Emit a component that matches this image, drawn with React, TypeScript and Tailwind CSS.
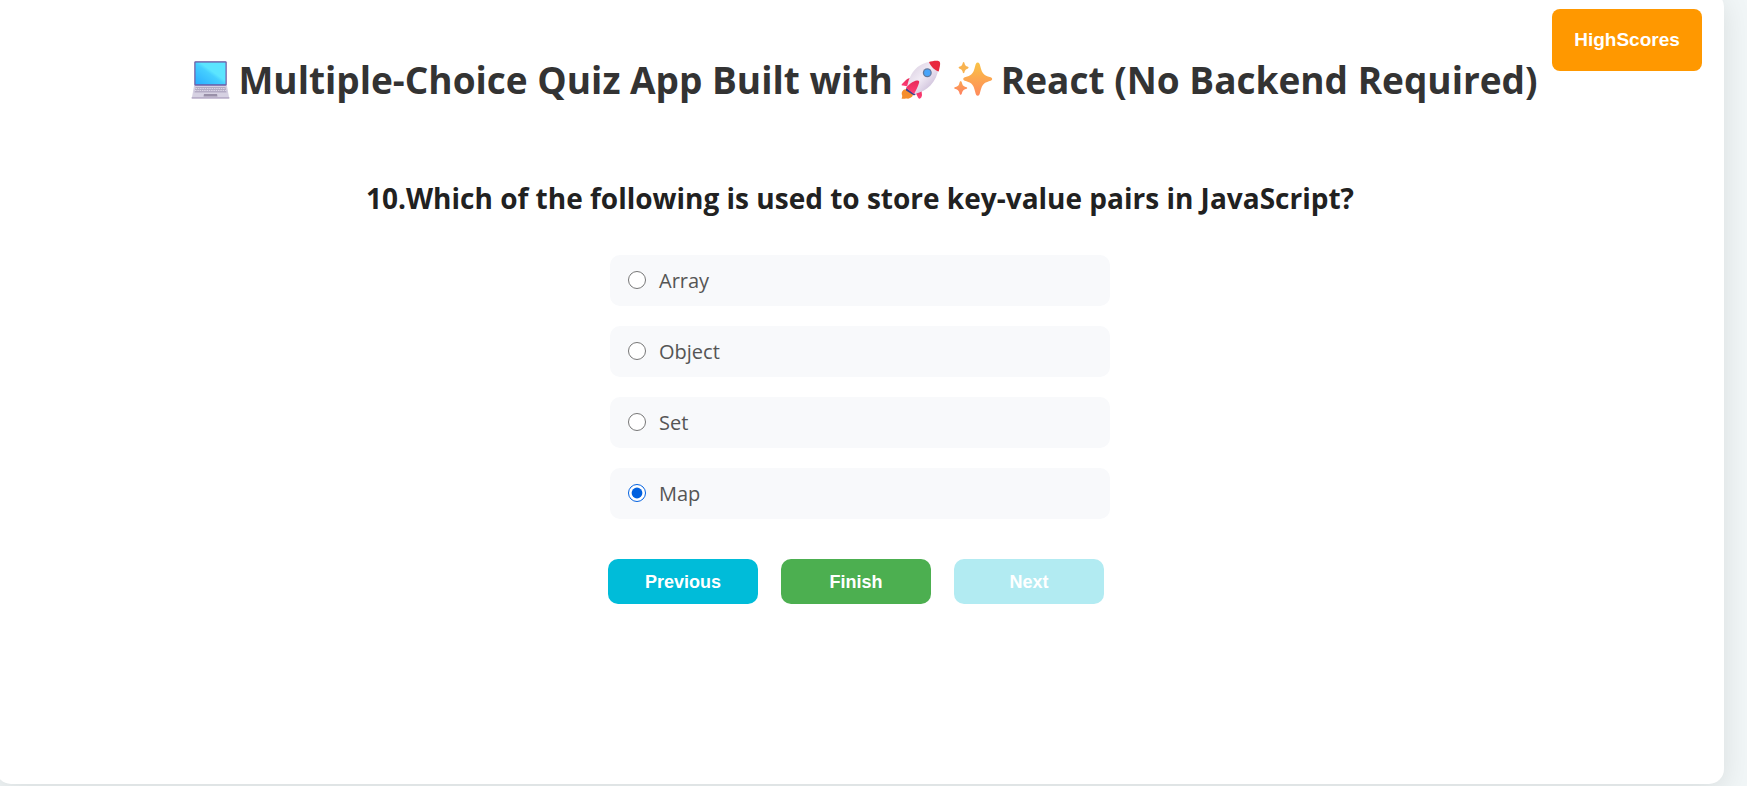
import { useState } from "react";

function Laptop() {
  return (
    <svg className="h-10 w-10 shrink-0" viewBox="0 0 40 40" aria-hidden="true">
      <defs>
        <linearGradient id="screen" x1="0" y1="1" x2="1" y2="0">
          <stop offset="0" stopColor="#2badff" />
          <stop offset="0.48" stopColor="#45cfff" />
          <stop offset="0.58" stopColor="#5be5ff" />
          <stop offset="1" stopColor="#5be5ff" />
        </linearGradient>
      </defs>
      <rect x="4" y="1" width="33" height="25" rx="1.5" fill="#a99cc8" />
      <rect x="4.6" y="1.6" width="31.8" height="24" rx="1" fill="#6b5fa8" />
      <rect x="5.5" y="2.6" width="30" height="21.6" fill="url(#screen)" />
      <path d="M4 26h33l2 11H2z" fill="#d6d1e2" />
      <path d="M5.5 27h30l1 5.5h-32z" fill="#b3abc4" />
      <path d="M5.5 28.5h30M5 30.5h31" stroke="#e4e0ee" strokeWidth="0.8" strokeDasharray="1.5 .8" />
      <path d="M14 34h13l.5 2.6h-14z" fill="#9990a8" />
      <rect x="1.5" y="37" width="38" height="1.8" rx=".7" fill="#b9afc9" />
    </svg>
  );
}

function Rocket() {
  return (
    <svg className="h-10 w-10 shrink-0" viewBox="0 0 40 40" aria-hidden="true">
      <defs>
        <linearGradient id="hull" x1="0.2" y1="0.2" x2="0.8" y2="0.8">
          <stop offset="0" stopColor="#e0d6e6" />
          <stop offset="0.45" stopColor="#f1ebf5" />
          <stop offset="1" stopColor="#cdbfda" />
        </linearGradient>
        <linearGradient id="fin" x1="0" y1="0" x2="0" y2="1">
          <stop offset="0" stopColor="#e82a58" />
          <stop offset="1" stopColor="#ff3f78" />
        </linearGradient>
      </defs>
      <path d="M6 29c-4 0-6 3-5 6 .5 1.5 0 2.5-.5 3.5 2 .8 3 0 4.5 0s2 .8 4-.5c2-1 3-2 3-4z" fill="#f58d2c" />
      <path d="M5 28l10 6-2 1.5-8-5z" fill="#3c3f8f" />
      <path d="M10 18c-2 .3-4 .7-5 2L1 24c-1 1 0 1.7 1 1.6l5 1z" fill="url(#fin)" />
      <path d="M20 27l1 8c0 1.5-1 3-2 3.5-1 .5-1.5 0-2-1l-2-4z" fill="url(#fin)" />
      <path d="M6 28C8 15 15 3 31 1.5c3-.4 6-.6 7 .5s0 4-.5 6C36 22 26 31 14 34z" fill="url(#hull)" />
      <path d="M28 2c3-1 8-1.800 10-.8s1 5-.3 10.300c-3.500-.7-8-5-9.700-9.500z" fill="#e8283f" />
      <circle cx="26.3" cy="12.7" r="4.5" fill="#63799c" />
      <circle cx="26.3" cy="12.7" r="3.2" fill="#48a5fa" />
      <path d="M5 28c2-3 7-7 11-7.5 2-.3 2.500.8 2 2.500-1 4-3 7-5 11z" fill="url(#fin)" />
    </svg>
  );
}

function Sparkles() {
  return (
    <svg className="h-10 w-10 shrink-0" viewBox="0 0 40 40" aria-hidden="true">
      <defs>
        <linearGradient id="spark" x1="0" y1="0" x2="0" y2="1">
          <stop offset="0" stopColor="#f9c345" />
          <stop offset="1" stopColor="#ff8a5c" />
        </linearGradient>
        <linearGradient id="sparkLow" x1="0" y1="0" x2="0" y2="1">
          <stop offset="0" stopColor="#fba552" />
          <stop offset="1" stopColor="#ff8062" />
        </linearGradient>
      </defs>
      <path
        d="M24.7 2.5c1.5 0 2 1.5 2.5 3.5 1 4 2 7 4 8.5s4 2 6.5 2.8c2 .7 2 2.7 0 3.4-2.5.8-4.5 1.3-6.5 2.8s-3 4.5-4 8.5c-.5 2-1 3.8-2.5 3.8s-2-1.800-2.500-3.800c-1-4-2-7-4-8.500s-4-2-6.500-2.800c-2-.7-2-2.700 0-3.400 2.500-.8 4.500-1.300 6.500-2.800s3-4.500 4-8.500c.5-2 1-3.500 2.500-3.500z"
        fill="url(#spark)"
      />
      <path d="M10.6 2q.8 0 1.2 2.2.6 2 3.2 2.6 1.4.8 0 1.6-2.6.6-3.2 2.6-.4 2.2-1.2 2.2T9.400 11q-.6-2-3.200-2.600-1.400-.8 0-1.600 2.600-.6 3.200-2.600Q9.800 2 10.600 2z" fill="#f8b350" />
      <path d="M7.7 21q1 0 1.6 3 .6 2.5 4.4 3.3 1.2.7 0 1.4-3.8.8-4.4 3.3-.6 3-1.6 3T6.100 32q-.6-2.500-4.400-3.300-1.200-.7 0-1.400 3.800-.8 4.400-3.300.6-3 1.600-3z" fill="url(#sparkLow)" />
    </svg>
  );
}

const options = ["Array", "Object", "Set", "Map"];
const navButton = "h-[45px] w-[150px] rounded-[10px] text-lg font-bold text-white";

export default function App() {
  const [answer, setAnswer] = useState("Map");
  return (
    <div className="min-h-screen overflow-hidden bg-[#f1f6f7] pr-[23px] pb-0.5 font-['Open_Sans','Noto_Sans',sans-serif]">
      <main className="relative -mt-2 -ml-1 min-h-[calc(100vh+6px)] rounded-[15px] bg-white pt-[68px] shadow-[0_8px_30px_rgba(0,0,0,0.1)]">
        <button className="absolute top-[17px] right-[22px] h-[62px] w-[150px] rounded-lg bg-[#ff9800] font-['Liberation_Sans',Arial,sans-serif] text-[19px] font-bold text-white">
          HighScores
        </button>
        <h1 className="flex h-10 items-center justify-center gap-2 pl-2 text-[37px] font-bold whitespace-nowrap text-[#333]">
          <Laptop />
          <span>Multiple-Choice Quiz App Built with</span>
          <span className="flex gap-3">
            <Rocket />
            <Sparkles />
          </span>
          <span>React (No Backend Required)</span>
        </h1>
        <form className="flex flex-col items-center pt-20" onSubmit={(e) => e.preventDefault()}>
          <fieldset className="flex flex-col items-center">
            <legend className="text-center text-[28px] leading-9 font-bold text-[#212121]">
              10.Which of the following is used to store key-value pairs in JavaScript?
            </legend>
            <div className="mt-[39px] flex w-[500px] max-w-full flex-col gap-5">
              {options.map((option) => (
                <label
                  key={option}
                  className="flex h-[51px] items-center rounded-[10px] bg-[#f8f9fb] pl-[18px] text-xl text-[#555]"
                >
                  <input
                    type="radio"
                    name="answer"
                    value={option}
                    checked={answer === option}
                    onChange={() => setAnswer(option)}
                    className="mr-[13px] mb-0.5 size-[18px] accent-[#0060df]"
                  />
                  {option}
                </label>
              ))}
            </div>
          </fieldset>
          <div className="mt-10 mr-2 flex gap-[23px] font-['Liberation_Sans',Arial,sans-serif]">
            <button type="button" className={`${navButton} bg-[#00bcd9]`}>Previous</button>
            <button type="submit" className={`${navButton} bg-[#4caf50]`}>Finish</button>
            <button type="button" disabled className={`${navButton} bg-[#b2ebf2]`}>Next</button>
          </div>
        </form>
      </main>
    </div>
  );
}
